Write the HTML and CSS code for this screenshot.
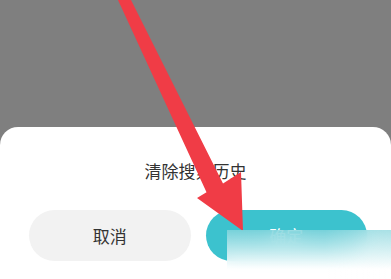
FILE: index.html
```html
<!DOCTYPE html>
<html lang="zh-CN">
<head>
  <meta charset="UTF-8" />
  <meta name="viewport" content="width=device-width, initial-scale=1.0"/>
  <title>清除搜索历史</title>
  <link rel="stylesheet" href="styles.css">
</head>
<body>
  <div class="screen">
    <div class="sheet">
      <div class="sheet-title">清除搜索历史</div>
      <div class="actions">
        <button class="btn btn-cancel">取消</button>
        <button class="btn btn-ok">确定</button>
      </div>
    </div>

    <svg class="arrow" width="391" height="279" viewBox="0 0 391 279">
      <polygon points="118,0 131,0 223,183.4 241,172 243,231 197,198 206.5,192.3" fill="#f03c46"/>
    </svg>
    <div class="watermark"></div>
  </div>
</body>
</html>
```

FILE: styles.css
```css
body {
  margin: 0;
  font-family: "Noto Sans CJK SC", "Noto Sans", sans-serif;
  background-color: #7f7f7f;
}
.screen {
  position: relative;
  width: 391px;
  height: 279px;
  overflow: hidden;
}
.sheet {
  margin-top: 127px;
  height: 152px;
  background: white;
  border-radius: 18px 18px 0 0;
  padding-top: 33px;
  box-sizing: border-box;
}
.sheet-title {
  text-align: center;
  font-size: 17px;
  line-height: 22px;
  color: #333;
}
.actions {
  display: flex;
  gap: 15px;
  padding: 0 24px 0 29px;
  margin-top: 28px;
}
.btn {
  flex: 1;
  height: 51px;
  border: none;
  border-radius: 26px;
  font-family: inherit;
  font-size: 17px;
  padding: 0;
}
.btn-cancel {
  background: #f2f2f2;
  color: #333;
}
.btn-ok {
  background: #3cc2ce;
  color: white;
}
.arrow {
  position: absolute;
  left: 0;
  top: 0;
}
.watermark {
  position: absolute;
  left: 227px;
  top: 230px;
  width: 164px;
  height: 49px;
  background:
    linear-gradient(to bottom, rgba(140,215,222,0.75), rgba(255,255,255,0.95) 80%),
    linear-gradient(to right, rgba(255,255,255,0) 60%, rgba(255,255,255,0.9));
  backdrop-filter: blur(9px);
}
```
